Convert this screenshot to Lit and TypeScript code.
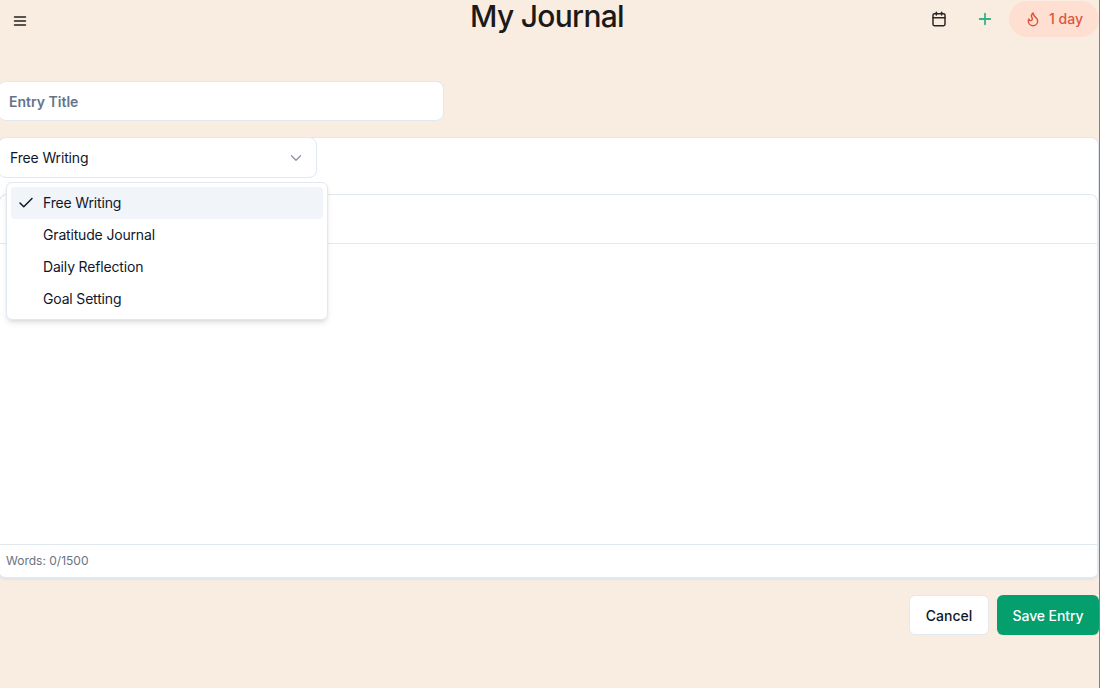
import { LitElement, html, css, svg } from "lit";
import { customElement } from "lit/decorators.js";

const sans = css`"Inter", "Liberation Sans", sans-serif`;

@customElement("app-root")
export class AppRoot extends LitElement {
  static styles = css`
    :host {
      display: block;
      width: 1100px;
      height: 688px;
      overflow: hidden;
      background: #f9ede1;
      font-family: ${sans};
      color: #0f172a;
    }
    .page {
      width: 1099px;
      height: 688px;
      display: flex;
      flex-direction: column;
      border-right: 1px solid #2fa98a;
    }
    .header {
      height: 37px;
      flex: none;
      display: grid;
      grid-template-columns: 1fr auto 1fr;
      align-items: center;
    }
    .menu {
      padding-left: 12px;
      display: flex;
      height: 16px;
      margin-top: 5px;
    }
    .title {
      font-size: 30px;
      font-weight: 500;
      line-height: 33px;
      letter-spacing: -0.7px;
      color: #1c1917;
      align-self: start;
      margin-left: -5px;
    }
    .actions {
      display: flex;
      align-items: center;
      justify-content: flex-end;
    }
    .icon-btn {
      width: 46px;
      height: 37px;
      display: flex;
      align-items: center;
      justify-content: center;
    }
    .streak {
      margin-left: 1px;
      width: 90px;
      height: 36px;
      border-radius: 18px;
      background: #fedfd2;
      color: #d9593c;
      font-size: 14px;
      font-weight: 500;
      display: flex;
      align-items: center;
      justify-content: center;
      gap: 8px;
    }
    .body {
      flex: 1;
      display: flex;
      flex-direction: column;
      padding-top: 44px;
      margin-left: -2px;
    }
    .entry-title {
      width: 446px;
      height: 40px;
      box-sizing: border-box;
      background: #fff;
      border: 1px solid #e2e8f0;
      border-radius: 8px;
      padding-left: 10px;
      display: flex;
      align-items: center;
      color: #64748b;
      font-size: 14px;
      font-weight: 600;
      flex: none;
    }
    .card {
      position: relative;
      margin-top: 16px;
      height: 442px;
      flex: none;
      box-sizing: border-box;
      background: #fff;
      border: 1px solid #e2e8f0;
      border-bottom-width: 2px;
      border-radius: 8px;
      box-shadow: 0 1px 2px rgba(0, 0, 0, 0.05);
      display: flex;
      flex-direction: column;
    }
    .select {
      position: absolute;
      left: -1px;
      top: -1px;
      width: 319px;
      height: 41px;
      box-sizing: border-box;
      border: 1px solid #e2e8f0;
      border-radius: 8px;
      background: #fff;
      display: flex;
      align-items: center;
      justify-content: space-between;
      padding: 0 11px 0 11px;
      font-size: 14px;
      letter-spacing: -0.15px;
      color: #0f172a;
    }
    .toolbar-space {
      height: 56px;
      flex: none;
    }
    .editor {
      flex: 1;
      display: flex;
      flex-direction: column;
      border: 1px solid #e2e8f0;
      border-width: 1px 1px 0 1px;
      border-radius: 8px 8px 0 0;
    }
    .toolbar {
      height: 48px;
      flex: none;
      border-bottom: 1px solid #e2e8f0;
    }
    .writing {
      flex: 1;
    }
    .footer {
      height: 33px;
      flex: none;
      box-sizing: border-box;
      border-top: 1px solid #e2e8f0;
      display: flex;
      align-items: center;
      padding: 0 0 2px 6px;
      font-size: 12px;
      color: #6b7280;
    }
    .menu-pop {
      position: absolute;
      left: 7px;
      top: 44px;
      width: 322px;
      height: 138px;
      box-sizing: border-box;
      background: #fff;
      border: 1px solid #e2e8f0;
      border-radius: 6px;
      box-shadow: 0 4px 6px -1px rgba(0, 0, 0, 0.1), 0 2px 4px -2px rgba(0, 0, 0, 0.1);
      padding: 4px;
      font-size: 14px;
      letter-spacing: -0.17px;
      color: #0f172a;
    }
    .opt {
      height: 32px;
      box-sizing: border-box;
      padding-bottom: 1px;
      border-radius: 4px;
      display: flex;
      align-items: center;
      padding-left: 32px;
      position: relative;
    }
    .opt.sel {
      background: #f1f5f9;
    }
    .check {
      position: absolute;
      left: 6px;
      top: 7px;
      display: flex;
    }
    .buttons {
      display: flex;
      justify-content: flex-end;
      gap: 8px;
      margin-top: 16px;
    }
    .btn {
      height: 40px;
      box-sizing: border-box;
      border-radius: 6px;
      font-size: 14px;
      font-weight: 500;
      display: flex;
      align-items: center;
      justify-content: center;
    }
    .cancel {
      width: 80px;
      background: #fff;
      border: 1px solid #e2e8f0;
      color: #0f172a;
    }
    .save {
      width: 102px;
      background: #059e6d;
      color: #fff;
      letter-spacing: -0.1px;
    }
    svg {
      display: block;
    }
  `;

  private icon(size: number, stroke: string, body: unknown, sw = 2) {
    return html`<svg
      width=${size}
      height=${size}
      viewBox="0 0 24 24"
      fill="none"
      stroke=${stroke}
      stroke-width=${sw}
      stroke-linecap="round"
      stroke-linejoin="round"
    >
      ${body}
    </svg>`;
  }

  render() {
    const options = ["Free Writing", "Gratitude Journal", "Daily Reflection", "Goal Setting"];
    return html`
      <div class="page">
        <header class="header">
          <div class="menu">
            ${this.icon(
              16,
              "#57534e",
              svg`<line x1="4" y1="6" x2="20" y2="6"/><line x1="4" y1="12" x2="20" y2="12"/><line x1="4" y1="18" x2="20" y2="18"/>`,
              2.8
            )}
          </div>
          <div class="title">My Journal</div>
          <div class="actions">
            <div class="icon-btn">
              ${this.icon(
                16,
                "#292524",
                svg`<path d="M8 2v4"/><path d="M16 2v4"/><rect x="3" y="4" width="18" height="18" rx="2"/><path d="M3 10h18"/>`,
                2.2
              )}
            </div>
            <div class="icon-btn">
              ${this.icon(18, "#34b38a", svg`<path d="M5 12h14"/><path d="M12 5v14"/>`, 2.4)}
            </div>
            <div class="streak">
              ${this.icon(
                16,
                "#d9593c",
                svg`<path d="M8.5 14.5A2.5 2.5 0 0 0 11 12c0-1.38-.5-2-1-3-1.072-2.143-.224-4.054 2-6 .5 2.5 2 4.9 4 6.5 2 1.6 3 3.5 3 5.5a7 7 0 1 1-14 0c0-1.153.433-2.294 1-3a2.5 2.5 0 0 0 2.5 2.5z"/>`,
                2.2
              )}
              <span>1 day</span>
            </div>
          </div>
        </header>
        <div class="body">
          <div class="entry-title">Entry Title</div>
          <div class="card">
            <div class="toolbar-space"></div>
            <div class="editor">
              <div class="toolbar"></div>
              <div class="writing"></div>
              <div class="footer">Words: 0/1500</div>
            </div>
            <div class="select">
              <span>Free Writing</span>
              ${this.icon(18, "#8b92a0", svg`<path d="m6 9 6 6 6-6"/>`, 1.7)}
            </div>
            <div class="menu-pop">
              ${options.map(
                (o, i) => html`<div class="opt ${i === 0 ? "sel" : ""}">
                  ${i === 0
                    ? html`<span class="check">${this.icon(18, "#0f172a", svg`<path d="M20 6 9 17l-5-5"/>`)}</span>`
                    : ""}
                  ${o}
                </div>`
              )}
            </div>
          </div>
          <div class="buttons">
            <div class="btn cancel">Cancel</div>
            <div class="btn save">Save Entry</div>
          </div>
        </div>
      </div>
    `;
  }
}
